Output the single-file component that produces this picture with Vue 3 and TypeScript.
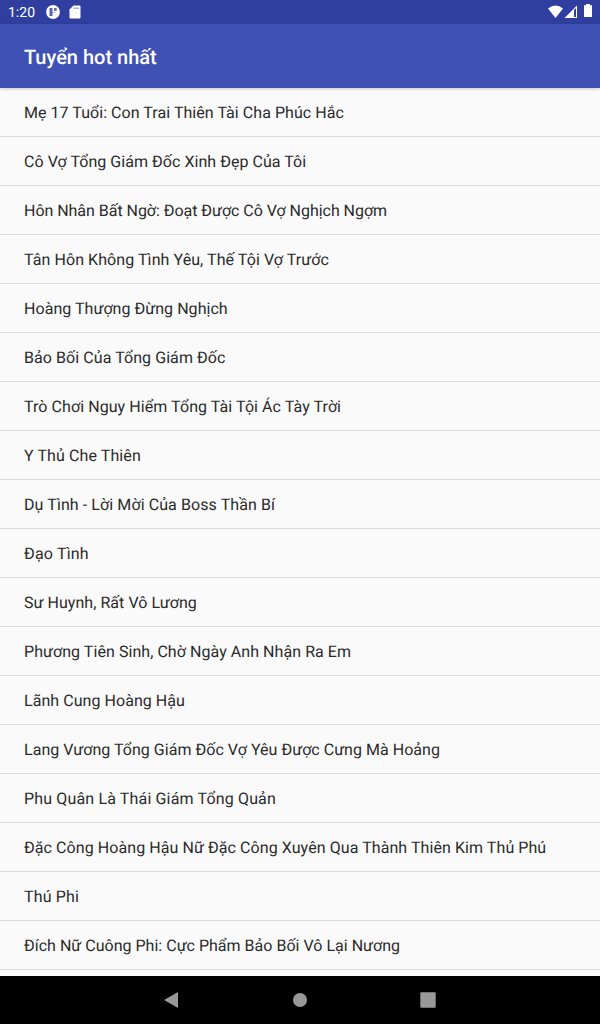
<script setup lang="ts">
interface Story {
  title: string
  tracking: number
}

const stories: Story[] = [
  { title: 'Mẹ 17 Tuổi: Con Trai Thiên Tài Cha Phúc Hắc', tracking: 0.047 },
  { title: 'Cô Vợ Tổng Giám Đốc Xinh Đẹp Của Tôi', tracking: 0.042 },
  { title: 'Hôn Nhân Bất Ngờ: Đoạt Được Cô Vợ Nghịch Ngợm', tracking: -0.033 },
  { title: 'Tân Hôn Không Tình Yêu, Thế Tội Vợ Trước', tracking: 0.073 },
  { title: 'Hoàng Thượng Đừng Nghịch', tracking: 0.045 },
  { title: 'Bảo Bối Của Tổng Giám Đốc', tracking: 0.07 },
  { title: 'Trò Chơi Nguy Hiểm Tổng Tài Tội Ác Tày Trời', tracking: 0.07 },
  { title: 'Y Thủ Che Thiên', tracking: 0.1 },
  { title: 'Dụ Tình - Lời Mời Của Boss Thần Bí', tracking: 0.088 },
  { title: 'Đạo Tình', tracking: 0.18 },
  { title: 'Sư Huynh, Rất Vô Lương', tracking: 0.05 },
  { title: 'Phương Tiên Sinh, Chờ Ngày Anh Nhận Ra Em', tracking: 0.06 },
  { title: 'Lãnh Cung Hoàng Hậu', tracking: 0.055 },
  { title: 'Lang Vương Tổng Giám Đốc Vợ Yêu Được Cưng Mà Hoảng', tracking: 0.035 },
  { title: 'Phu Quân Là Thái Giám Tổng Quản', tracking: 0.155 },
  { title: 'Đặc Công Hoàng Hậu Nữ Đặc Công Xuyên Qua Thành Thiên Kim Thủ Phú', tracking: 0.075 },
  { title: 'Thú Phi', tracking: 0.16 },
  { title: 'Đích Nữ Cuông Phi: Cực Phẩm Bảo Bối Vô Lại Nương', tracking: 0.015 },
]
</script>

<template>
  <div class="screen">
    <header class="status">
      <span class="clock">1:20</span>
      <svg class="app-icon" width="14" height="14" viewBox="0 0 14 14">
        <circle cx="7" cy="7" r="6.900" fill="#fff" />
        <path fill="#303f9f" fill-opacity=".8" d="M3.500 3h3v8h-3z" />
        <path fill="#303f9f" fill-opacity=".75" d="M8 3h2.700v3H8z" />
        <path fill="#303f9f" fill-opacity=".4" d="M6.500 7.200h3v.8h-3z" />
      </svg>
      <svg class="sd-icon" width="12" height="14" viewBox="0 0 12 14">
        <path fill="#fff" d="M4.500 .5h6q1 0 1 1v11q0 1-1 1h-9q-1 0-1-1v-8z" />
        <path fill="#303f9f" fill-opacity=".4" d="M4.500 2.500h5.500v1.500H4.500z" />
      </svg>
      <span class="spacer"></span>
      <svg class="system" width="44" height="16" viewBox="0 0 44 16">
        <path fill="#fff" d="M0 4.500Q7.500-1.500 15 4.500L7.500 14z" />
        <path fill="#fff" fill-rule="evenodd" d="M29 1.500V14H16.500zM28 4l-2 2v7h2z" />
        <path fill="#fff" d="M36 1.200h2V0h4v1.200h2V13h-8z" />
      </svg>
    </header>
    <h1 class="toolbar">Tuyển hot nhất</h1>
    <ul class="list">
      <li
        v-for="story in stories"
        :key="story.title"
        :style="{ letterSpacing: story.tracking + 'px' }"
      >{{ story.title }}</li>
    </ul>
    <nav class="nav">
      <svg width="600" height="48" viewBox="0 0 600 48">
        <g fill="#999">
          <path d="M178 16v16l-14-8z" />
          <circle cx="300" cy="24" r="7" />
          <rect x="420.300" y="16.300" width="15.400" height="15.400" rx="1" />
        </g>
      </svg>
    </nav>
  </div>
</template>

<style scoped>
.screen { width: 600px; height: 1024px; display: flex; flex-direction: column; overflow: hidden; background: #fafafa; font-family: Roboto, sans-serif; text-rendering: geometricPrecision; }
.status { height: 24px; flex: none; display: flex; align-items: center; background: #303f9f; color: #fff; }
.clock { width: 38px; box-sizing: border-box; padding-left: 8px; font-size: 14px; line-height: 24px; padding-top: 1px; }
.app-icon { margin-left: 8px; }
.sd-icon { margin-left: 9px; }
.spacer { flex: 1; }
.system { margin-right: 8px; }
.toolbar { height: 64px; line-height: 66px; flex: none; margin: 0; padding-left: 24px; background: #3f51b5; color: #fff; font-size: 20px; font-weight: 500; position: relative; box-shadow: 0 1px 3px rgba(0, 0, 0, .2); }
.list { flex: 1; min-height: 0; margin: 0; padding: 0; list-style: none; overflow: hidden; }
li { height: 48px; line-height: 49px; padding-left: 24px; border-bottom: 1px solid #dadada; font-size: 16px; color: #2a2a2a; white-space: nowrap; }
.nav { height: 48px; flex: none; background: #000; }
svg { display: block; flex: none; }
</style>
